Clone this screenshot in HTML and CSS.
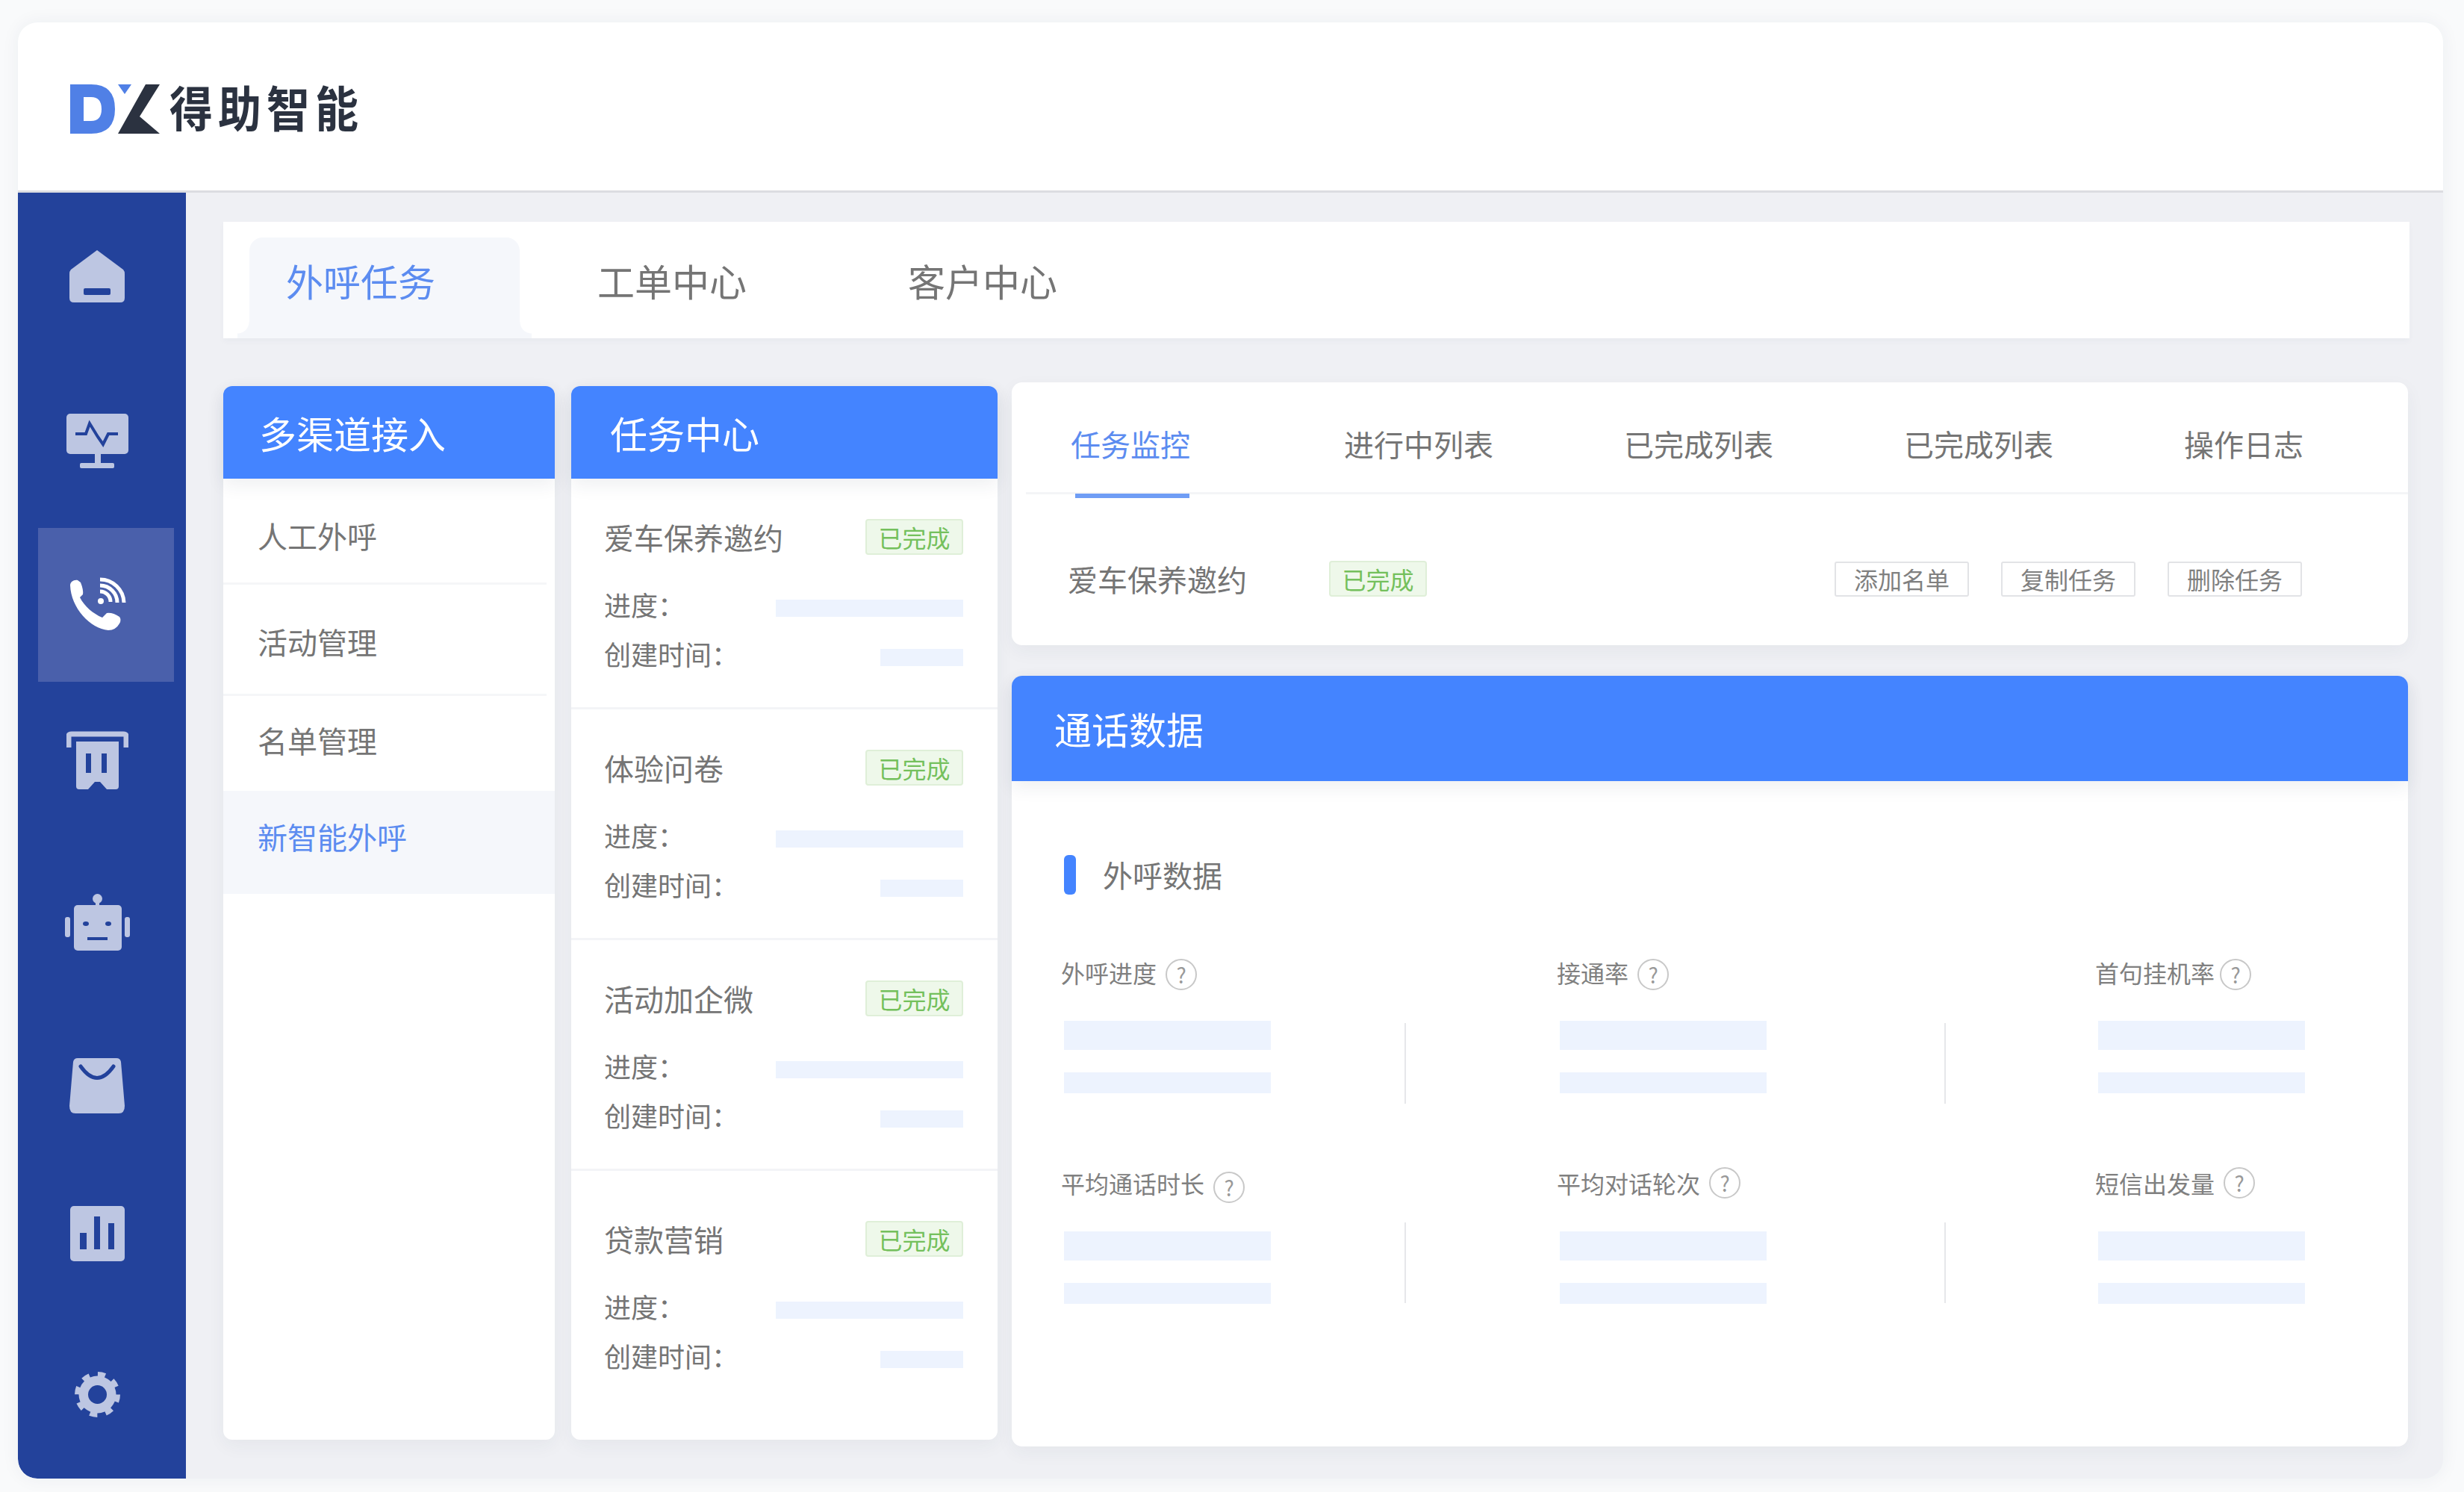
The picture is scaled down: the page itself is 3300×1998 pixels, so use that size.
FILE: index.html
```html
<!DOCTYPE html>
<html lang="zh-CN">
  <head>
    <meta charset="utf-8">
    <title>得助智能</title>
    <link rel="stylesheet" href="styles.css">
  </head>
  <body>
    <div class="window">
      <!-- Logo bar -->
      <header class="topbar">
        <svg class="logo-mark" viewBox="0 0 120 66" width="120" height="66">
          <path fill="#5080e6" fill-rule="evenodd" d="M0 0H28Q60 0 60 33Q60 66 28 66H0ZM18 17V49H28Q42 49 42 33Q42 17 28 17Z"/>
          <path fill="#5080e6" d="M64 0H82L73 13Z"/>
          <path fill="#2b3240" d="M101 0H120L93 43L120 66H64Z"/>
        </svg>
        <span class="logo-text">得助智能</span>
      </header>

      <div class="body">
        <!-- Icon rail -->
        <nav class="sidebar">
          <div class="nav-item">
            <svg viewBox="0 0 74 70" width="74" height="70">
              <path class="ic" d="M37 0L72 26Q74 28 74 32V64Q74 70 68 70H6Q0 70 0 64V32Q0 28 2 26Z"/>
              <rect class="ic-cut" x="19" y="51" width="36" height="9" rx="2"/>
            </svg>
          </div>
          <div class="nav-item">
            <svg viewBox="0 0 83 73" width="83" height="73">
              <rect class="ic" width="83" height="54" rx="5"/>
              <rect class="ic" x="38" y="54" width="8" height="13"/>
              <rect class="ic" x="18" y="66" width="46" height="7" rx="2"/>
              <path class="ic-line" d="M12 27H26L31 13L42 31L49 41L56 27H69"/>
            </svg>
          </div>
          <div class="nav-item active">
            <svg viewBox="0 0 79 77" width="79" height="77">
              <path fill="#fff" d="M3 12C3 7 8 4 13 5L17 8Q21 18 20 24L16 28C22 40 34 50 46 55L52 49Q60 48 69 54Q72 58 69 63Q64 72 54 72C30 70 4 42 3 12Z"/>
              <circle fill="#fff" cx="44" cy="33" r="4"/>
              <path class="ic-wave" d="M43 20A14 14 0 0 1 57 34M43 12A23 23 0 0 1 66 35M43 4A32 32 0 0 1 75 35"/>
            </svg>
          </div>
          <div class="nav-item">
            <svg viewBox="0 0 83 78" width="83" height="78">
              <path class="ic-bar" d="M3 22V7Q3 4 7 4H76Q80 4 80 7V22"/>
              <path class="ic" d="M13 14H70V74Q70 78 66 78H54L45 68H38L29 78H17Q13 78 13 74Z"/>
              <rect class="ic-cut" x="26" y="30" width="7" height="26"/>
              <rect class="ic-cut" x="47" y="30" width="7" height="26"/>
            </svg>
          </div>
          <div class="nav-item">
            <svg viewBox="0 0 87 76" width="87" height="76">
              <circle class="ic" cx="43.5" cy="6.5" r="6.5"/>
              <rect class="ic" x="41" y="10" width="5" height="8"/>
              <rect class="ic" x="12" y="15" width="64" height="61" rx="5"/>
              <rect class="ic" y="31" width="7" height="27" rx="3"/>
              <rect class="ic" x="80" y="31" width="7" height="27" rx="3"/>
              <ellipse class="ic-cut" cx="28" cy="40" rx="4" ry="3"/>
              <ellipse class="ic-cut" cx="58" cy="40" rx="4" ry="3"/>
              <rect class="ic-cut" x="30" y="58" width="27" height="4"/>
            </svg>
          </div>
          <div class="nav-item">
            <svg viewBox="0 0 74 74" width="74" height="74">
              <path class="ic" d="M11 0H63Q68 0 69 5L74 64Q74 74 66 74H8Q0 74 0 64L5 5Q6 0 11 0Z"/>
              <path class="ic-smile" d="M15 11Q37 42 59 11"/>
            </svg>
          </div>
          <div class="nav-item">
            <svg viewBox="0 0 73 74" width="73" height="74">
              <rect class="ic" width="73" height="74" rx="5"/>
              <rect class="ic-cut" x="13" y="36" width="9" height="22"/>
              <rect class="ic-cut" x="32" y="14" width="8" height="44"/>
              <rect class="ic-cut" x="51" y="23" width="8" height="35"/>
            </svg>
          </div>
          <div class="nav-item nav-last">
            <svg viewBox="0 0 63 61" width="63" height="61">
              <circle class="ic" cx="31.5" cy="30.5" r="25"/>
              <circle class="ic-teeth" cx="31.5" cy="30.5" r="27"/>
              <circle class="ic-cut" cx="31.5" cy="30.5" r="12.5"/>
            </svg>
          </div>
        </nav>

        <main class="content">
          <!-- Page tabs -->
          <div class="page-tabs">
            <div class="page-tab active">外呼任务</div>
            <div class="page-tab">工单中心</div>
            <div class="page-tab">客户中心</div>
          </div>

          <div class="columns">
            <section class="col col-menu">
              <h2 class="blue-head">多渠道接入</h2>
              <div class="menu-item">人工外呼</div>
              <div class="menu-item">活动管理</div>
              <div class="menu-item">名单管理</div>
              <div class="menu-item active">新智能外呼</div>
            </section>

            <section class="col col-tasks">
              <h2 class="blue-head">任务中心</h2>
              <div class="task">
                <div class="task-title"><span>爱车保养邀约</span><span class="badge">已完成</span></div>
                <div class="task-row"><span>进度：</span><i class="ph ph-long"></i></div>
                <div class="task-row"><span>创建时间：</span><i class="ph ph-short"></i></div>
              </div>
              <div class="task">
                <div class="task-title"><span>体验问卷</span><span class="badge">已完成</span></div>
                <div class="task-row"><span>进度：</span><i class="ph ph-long"></i></div>
                <div class="task-row"><span>创建时间：</span><i class="ph ph-short"></i></div>
              </div>
              <div class="task">
                <div class="task-title"><span>活动加企微</span><span class="badge">已完成</span></div>
                <div class="task-row"><span>进度：</span><i class="ph ph-long"></i></div>
                <div class="task-row"><span>创建时间：</span><i class="ph ph-short"></i></div>
              </div>
              <div class="task task-last">
                <div class="task-title"><span>贷款营销</span><span class="badge">已完成</span></div>
                <div class="task-row"><span>进度：</span><i class="ph ph-long"></i></div>
                <div class="task-row"><span>创建时间：</span><i class="ph ph-short"></i></div>
              </div>
            </section>

            <div class="col-right">
              <section class="monitor">
                <div class="mon-tabs">
                  <div class="mon-tab active">任务监控</div>
                  <div class="mon-tab">进行中列表</div>
                  <div class="mon-tab">已完成列表</div>
                  <div class="mon-tab">已完成列表</div>
                  <div class="mon-tab">操作日志</div>
                </div>
                <div class="mon-row">
                  <span>爱车保养邀约</span>
                  <span class="badge badge-row">已完成</span>
                  <div class="mon-actions">
                    <span class="btn">添加名单</span>
                    <span class="btn">复制任务</span>
                    <span class="btn">删除任务</span>
                  </div>
                </div>
              </section>

              <section class="calls">
                <h2 class="blue-head calls-head">通话数据</h2>
                <div class="calls-body">
                  <h3 class="sec-title">外呼数据</h3>

                  <div class="metric-row">
                    <div class="metric">
                      <div class="metric-label">外呼进度<span class="help">?</span></div>
                      <i class="ph ph-big"></i>
                      <i class="ph ph-small"></i>
                    </div>
                    <i class="vline"></i>
                    <div class="metric metric-mid">
                      <div class="metric-label">接通率<span class="help">?</span></div>
                      <i class="ph ph-big"></i>
                      <i class="ph ph-small"></i>
                    </div>
                    <i class="vline"></i>
                    <div class="metric metric-end">
                      <div class="metric-label">首句挂机率<span class="help help-near">?</span></div>
                      <i class="ph ph-big"></i>
                      <i class="ph ph-small"></i>
                    </div>
                  </div>

                  <div class="metric-row metric-row-2">
                    <div class="metric">
                      <div class="metric-label">平均通话时长<span class="help help-low">?</span></div>
                      <i class="ph ph-big"></i>
                      <i class="ph ph-small"></i>
                    </div>
                    <i class="vline"></i>
                    <div class="metric metric-mid">
                      <div class="metric-label">平均对话轮次<span class="help help-high">?</span></div>
                      <i class="ph ph-big"></i>
                      <i class="ph ph-small"></i>
                    </div>
                    <i class="vline"></i>
                    <div class="metric metric-end">
                      <div class="metric-label">短信出发量<span class="help help-high">?</span></div>
                      <i class="ph ph-big"></i>
                      <i class="ph ph-small"></i>
                    </div>
                  </div>
                </div>
              </section>
            </div>
          </div>
        </main>
      </div>
    </div>
  </body>
</html>
```

FILE: styles.css
```css
* {
  box-sizing: border-box;
}

html,
body {
  margin: 0;
  height: 1998px;
  overflow: hidden;
}

body {
  background-color: #f9fafb;
  font-family: "Noto Sans CJK SC", "Noto Sans", sans-serif;
  color: #757575;
}

h2,
h3 {
  margin: 0;
  font-weight: 400;
}

/* Window frame */
.window {
  width: 3248px;
  height: 1950px;
  margin: 30px 0 0 24px;
  border-radius: 26px;
  overflow: hidden;
  background-color: #eff0f4;
  box-shadow: 0 0 24px rgba(40, 50, 80, 0.06);
}

.topbar {
  display: flex;
  align-items: center;
  gap: 13px;
  height: 228px;
  padding: 7px 0 0 70px;
  background-color: #fff;
  border-bottom: 3px solid #dcdde1;
}

.logo-text {
  margin-bottom: 8px;
  font-size: 58px;
  font-weight: 700;
  line-height: 66px;
  letter-spacing: 7px;
  color: #2b3240;
  transform: scaleY(1.12);
}

.body {
  display: flex;
  height: 1722px;
}

/* Icon rail */
.sidebar {
  display: grid;
  grid-template-rows: 223px 218px 215px 207px 228px 210px 186px 1fr;
  width: 225px;
  flex-shrink: 0;
  background-color: #23429b;
  border-bottom-left-radius: 26px;
}

.nav-item {
  display: flex;
  align-items: center;
  justify-content: center;
  width: 182px;
  margin-left: 27px;
  padding-right: 24px;
}

.nav-item.active {
  align-self: end;
  height: 206px;
  margin-bottom: 1px;
  background-color: #4a60ab;
}

.nav-last {
  align-items: flex-start;
  padding-top: 92px;
}

.ic {
  fill: #bdc6e2;
}

.ic-cut {
  fill: #23429b;
}

.ic-line {
  fill: none;
  stroke: #23429b;
  stroke-width: 4;
}

.ic-wave {
  fill: none;
  stroke: #fff;
  stroke-width: 5;
}

.ic-bar {
  fill: none;
  stroke: #bdc6e2;
  stroke-width: 7;
}

.ic-smile {
  fill: none;
  stroke: #23429b;
  stroke-width: 5;
  stroke-linecap: round;
}

.ic-teeth {
  fill: none;
  stroke: #bdc6e2;
  stroke-width: 7;
  stroke-dasharray: 10 11.2;
}

/* Main area */
.content {
  flex: 1;
  padding: 39px 45px 0 50px;
}

.page-tabs {
  display: flex;
  height: 156px;
  padding: 21px 0 0 35px;
  background-color: #fff;
  box-shadow: 0 4px 8px rgba(40, 50, 80, 0.03);
}

.page-tab {
  width: 416px;
  font-size: 50px;
  line-height: 114px;
}

.page-tab.active {
  position: relative;
  width: 362px;
  margin-right: 104px;
  padding-left: 49px;
  border-radius: 18px 18px 0 0;
  background-color: #f5f7fb;
  color: #5c8cf0;
}

/* Little flares at the foot of the active tab */
.page-tab.active::before,
.page-tab.active::after {
  content: "";
  position: absolute;
  bottom: 0;
  width: 16px;
  height: 22px;
}

.page-tab.active::before {
  left: -16px;
  background: radial-gradient(circle at 0 0, #fff 15px, #f5f7fb 16px);
}

.page-tab.active::after {
  right: -16px;
  background: radial-gradient(circle at 100% 0, #fff 15px, #f5f7fb 16px);
}

.columns {
  display: flex;
  align-items: flex-start;
  margin-top: 59px;
}

.blue-head {
  height: 124px;
  padding-left: 48px;
  font-size: 50px;
  line-height: 124px;
  color: #fff;
  background-color: #4484ff;
  border-radius: 12px 12px 0 0;
  box-shadow: 0 8px 24px rgba(40, 50, 80, 0.08);
}

.col {
  height: 1411px;
  margin-top: 5px;
  border-radius: 12px;
  background-color: #fff;
  box-shadow: 0 8px 24px rgba(40, 50, 80, 0.05);
}

/* Left menu */
.col-menu {
  flex: none;
  width: 444px;
  margin-right: 22px;
}

.menu-item {
  height: 149px;
  margin-right: 11px;
  padding: 48px 0 0 46px;
  font-size: 40px;
  line-height: 56px;
  border-bottom: 3px solid #f5f6f8;
}

.menu-item:nth-of-type(1) {
  height: 142px;
}

.menu-item:nth-of-type(3) {
  height: 127px;
  padding-top: 31px;
  border-bottom: 0;
}

.menu-item.active {
  height: 138px;
  margin-right: 0;
  padding-top: 33px;
  border-bottom: 0;
  background-color: #f5f7fb;
  color: #5c8cf0;
}

/* Task list */
.col-tasks {
  flex: none;
  width: 571px;
  margin-right: 19px;
}

.col-tasks .blue-head {
  padding-left: 52px;
}

.task {
  height: 309px;
  padding: 50px 46px 0 44px;
  font-size: 36px;
  border-bottom: 3px solid #f3f4f7;
}

.task-last {
  height: 300px;
  padding-top: 63px;
  border-bottom: 0;
}

.task-title {
  display: flex;
  align-items: center;
  justify-content: space-between;
  height: 56px;
  margin-bottom: 38px;
  font-size: 40px;
}

.task-row {
  display: flex;
  align-items: center;
  justify-content: space-between;
  height: 48px;
  margin-bottom: 18px;
}

.badge {
  width: 131px;
  height: 48px;
  font-size: 32px;
  line-height: 44px;
  text-align: center;
  color: #74c05c;
  background-color: #eef8ea;
  border: 2px solid #dfefd8;
  border-radius: 4px;
}

/* Placeholder blocks */
.ph {
  display: block;
  background-color: #edf3fe;
}

.ph-long {
  width: 251px;
  height: 23px;
  margin-top: 10px;
}

.ph-short {
  width: 111px;
  height: 23px;
  margin-top: 10px;
}

/* Right side */
.col-right {
  flex: none;
  width: 1870px;
}

.monitor {
  height: 352px;
  border-radius: 14px;
  background-color: #fff;
  box-shadow: 0 8px 24px rgba(40, 50, 80, 0.05);
}

.mon-tabs {
  display: flex;
  height: 150px;
  margin-left: 19px;
  padding: 54px 0 0 60px;
  font-size: 40px;
  line-height: 56px;
  border-bottom: 3px solid #f4f5f7;
}

.mon-tab {
  position: relative;
  flex: none;
  width: 375px;
}

.mon-tab:first-child {
  width: 366px;
}

.mon-tab.active {
  color: #5c8cf0;
}

.mon-tab.active::after {
  content: "";
  position: absolute;
  left: 6px;
  top: 95px;
  width: 153px;
  height: 6px;
  background-color: #6f9df5;
}

.mon-row {
  display: flex;
  align-items: center;
  height: 202px;
  padding: 24px 142px 0 75px;
  font-size: 40px;
}

.badge-row {
  margin-left: 110px;
}

.mon-actions {
  display: flex;
  gap: 43px;
  margin-left: auto;
}

.btn {
  width: 180px;
  height: 47px;
  font-size: 32px;
  line-height: 43px;
  text-align: center;
  color: #808080;
  border: 2px solid #e2e3e6;
  border-radius: 3px;
}

.calls {
  height: 1032px;
  margin-top: 41px;
  border-radius: 14px;
  background-color: #fff;
  box-shadow: 0 8px 24px rgba(40, 50, 80, 0.05);
}

.calls-head {
  height: 141px;
  padding-left: 57px;
  line-height: 140px;
  border-radius: 14px 14px 0 0;
}

.calls-body {
  padding: 99px 0 0 66px;
}

.sec-title {
  display: flex;
  align-items: center;
  gap: 36px;
  height: 53px;
  margin: 0 0 86px 4px;
  font-size: 40px;
  line-height: 53px;
}

.sec-title::before {
  content: "";
  width: 16px;
  height: 53px;
  border-radius: 6px;
  background-color: #4484ff;
}

/* Metric grid */
.metric-row {
  display: flex;
  align-items: flex-start;
  height: 194px;
  --line-top: 86px;
}

.metric-row-2 {
  margin-top: 88px;
  --line-top: 71px;
}

.metric {
  flex: none;
  width: 460px;
}

.metric-mid {
  width: 519px;
  margin-left: 202px;
}

.metric-end {
  width: 320px;
  margin-left: 200px;
}

.metric-label {
  display: flex;
  align-items: center;
  gap: 12px;
  height: 42px;
  margin-bottom: 41px;
  padding-bottom: 6px;
  font-size: 32px;
  color: #808080;
}

.help {
  flex: none;
  width: 42px;
  height: 42px;
  margin-top: 6px;
  font-size: 28px;
  line-height: 38px;
  text-align: center;
  color: #999;
  border: 2px solid #c8c8c8;
  border-radius: 50%;
}

.help-near {
  margin-left: -5px;
}

.help-low {
  margin-top: 12px;
}

.help-high {
  margin-top: 2px;
  margin-bottom: 2px;
}

.ph-big {
  width: 277px;
  height: 39px;
  margin: 0 0 30px 4px;
}

.ph-small {
  width: 277px;
  height: 28px;
  margin-left: 4px;
}

.vline {
  display: block;
  flex: none;
  width: 2px;
  height: 108px;
  margin-top: var(--line-top);
  background-color: #e6e7ea;
}
```
